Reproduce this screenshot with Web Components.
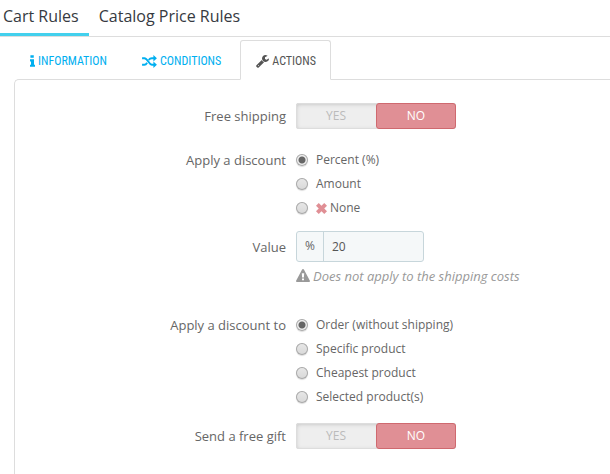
<!DOCTYPE html>
<html lang="en">
<head>
<meta charset="utf-8">
<title>Cart Rules</title>
<style>
  body { margin: 0; background: #fff; color: #666; font: 12px/24px "Open Sans", "Noto Sans", sans-serif; }
</style>
</head>
<body>
<page-nav>
  <nav-link href="#cart-rules" current>Cart Rules</nav-link>
  <nav-link href="#catalog-price-rules">Catalog Price Rules</nav-link>
</page-nav>
<tab-bar>
  <tab-item icon="info">INFORMATION</tab-item>
  <tab-item icon="random">CONDITIONS</tab-item>
  <tab-item icon="wrench" selected>ACTIONS</tab-item>
</tab-bar>
<rule-panel>
  <switch-row label="Free shipping"></switch-row>
  <radio-row label="Apply a discount" options="Percent (%)|Amount|None" crossed="None"></radio-row>
  <value-row label="Value" unit="%" value="20">Does not apply to the shipping costs</value-row>
  <radio-row label="Apply a discount to" options="Order (without shipping)|Specific product|Cheapest product|Selected product(s)"></radio-row>
  <switch-row label="Send a free gift"></switch-row>
</rule-panel>

<script>
const ICONS = {
  info: ['0 0 6 14', 5, 12, '<path d="M.5 0h4v3.200h-4zM0 5h4.800v6.500H6V14H0v-2.500h1.200V7.500H0z"/>'],
  random: ['0 0 16 14', 15, 13, '<path d="M0 3.500h2.500c3.800 0 4.500 7 8 7H13M0 10.500h2.500c1.300 0 2.200-1 2.900-2.200M7.200 5.400C8 4.200 9 3.500 10.500 3.500H13" fill="none" stroke="currentColor" stroke-width="2"/><path d="M12.200 0 16 3.500 12.200 7zM12.200 7 16 10.500 12.200 14z"/>'],
  wrench: ['0 0 1664 1664', 13, 13, '<path d="M384 1344q0-26-19-45t-45-19-45 19-19 45 19 45 45 19 45-19 19-45zm644-420-682 682q-37 37-90 37-52 0-91-37L59 1498q-38-36-38-90 0-53 38-91l681-681q39 98 114.500 173.500T1028 924zm634-435q0 39-23 106-47 134-164.500 217.500T1216 896q-185 0-316.500-131.500T768 448t131.500-316.500T1216 0q58 0 121.500 16.500T1445 63q16 11 16 28t-16 28l-293 169v224l193 107q5-3 79-48.500t135.500-81T1630 454q15 0 23.500 10t8.500 25z"/>'],
  cross: ['0 0 12 12', 11, 11, '<path d="M3 0 6 3 9 0l3 3-3 3 3 3-3 3-3-3-3 3-3-3 3-3-3-3z"/>'],
  warning: ['0 0 14 13', 14, 13, '<path fill-rule="evenodd" d="M7 0q.6 0 .9.500l6 11.200Q14.300 13 13 13H1Q-.3 13 .1 11.700L6.100.5Q6.400 0 7 0zM5.800 4.200 6.100 8.500h1.800L8.200 4.200zM6 9.500v1.800h2V9.500z"/>']
};
const icon = name => {
  const [box, w, h, body] = ICONS[name];
  return `<svg viewBox="${box}" width="${w}" height="${h}" fill="currentColor" aria-hidden="true">${body}</svg>`;
};
const define = (name, render) => customElements.define(name, class extends HTMLElement {
  constructor() { super(); this.attachShadow({ mode: 'open' }); }
  connectedCallback() { this.shadowRoot.innerHTML = render(this); }
});

define('page-nav', () => `
  <style>
    :host { display: block; border-bottom: 1px solid #ddd; }
    nav { display: flex; gap: 7px; height: 36px; }
  </style>
  <nav><slot></slot></nav>`);

define('nav-link', el => `
  <style>
    :host { display: flex; }
    a { box-sizing: border-box; padding: 4px 10px 0 3px; color: #363a41; font-size: 16px; line-height: 25px; text-decoration: none; border-bottom: 3px solid transparent; white-space: nowrap; }
    a[aria-current] { border-color: #42d0ed; }
  </style>
  <a href="${el.getAttribute('href')}" ${el.hasAttribute('current') ? 'aria-current="page"' : ''}><slot></slot></a>`);

define('tab-bar', () => `
  <style>
    :host { display: flex; align-items: flex-end; gap: 4px; padding: 3px 0 0 14px; }
  </style>
  <slot></slot>`);

define('tab-item', el => `
  <style>
    :host { display: block; position: relative; margin-bottom: -1px; }
    button { display: flex; align-items: center; gap: 3px; height: 40px; box-sizing: border-box; padding: 2px 14px 0 15px; border: 1px solid transparent; border-radius: 3px 3px 0 0; background: none; color: #00aff0; font: 12px/20px "Ubuntu Condensed", "Roboto Condensed", "Liberation Sans Narrow", sans-serif; white-space: nowrap; }
    button[aria-selected=true] { border-color: #ddd #ddd #fff; background: #fff; color: #555; }
  </style>
  <button type="button" role="tab" aria-selected="${el.hasAttribute('selected')}">${icon(el.getAttribute('icon'))}<slot></slot></button>`);

define('rule-panel', () => `
  <style>
    :host { display: block; margin-left: 14px; padding: 9px 0 25px; border: solid #ddd; border-width: 1px 0 0 1px; border-radius: 5px 0 0 0; }
  </style>
  <slot></slot>`);

const ROW = `
  :host { display: block; }
  .row { display: grid; grid-template-columns: 271px minmax(0, 1fr); column-gap: 10px; }
  .name { font-size: 13px; line-height: 26px; text-align: right; }`;

define('switch-row', el => `
  <style>${ROW}
    :host { margin: 14px 0 19px; }
    .switch { display: grid; grid-template-columns: 1fr 1fr; width: 160px; height: 26px; border-radius: 3px; background: #eee; box-shadow: inset 0 0 0 1px #ddd, inset 0 1px 4px #bbb; }
    label { position: relative; display: grid; place-items: center; line-height: 24px; color: #bbb; border: 1px solid transparent; border-radius: 3px; }
    input { position: absolute; inset: 0; margin: 0; opacity: 0; }
    label:has(:checked) { background: #e08f95; border-color: #cf696f; color: #fff; }
  </style>
  <div class="row">
    <span class="name" id="name">${el.getAttribute('label')}</span>
    <div class="switch" role="radiogroup" aria-labelledby="name">
      <label><input type="radio" name="state">YES</label>
      <label><input type="radio" name="state" checked>NO</label>
    </div>
  </div>`);

define('radio-row', el => `
  <style>${ROW}
    :host { margin-bottom: 11px; }
    .name { line-height: 25px; }
    .options { display: grid; justify-items: start; }
    label { display: flex; align-items: center; gap: 8px; height: 24px; }
    .text { display: flex; align-items: center; gap: 3px; }
    svg { color: #e08f95; }
    input { appearance: none; width: 12px; height: 12px; margin: 0; border-radius: 50%; background: linear-gradient(#e8e8e8, #d8d8d8); box-shadow: inset 0 0 0 1px #aaa, 0 1px 1px #ddd; }
    input:checked { background: radial-gradient(circle, #666 0 3px, #eee 4px); }
  </style>
  <div class="row" role="radiogroup" aria-labelledby="name">
    <span class="name" id="name">${el.getAttribute('label')}</span>
    <div class="options">${el.getAttribute('options').split('|').map((text, i) => `
      <label><input type="radio" name="choice" ${i ? '' : 'checked'}><span class="text">${text === el.getAttribute('crossed') ? icon('cross') : ''}<span>${text}</span></span></label>`).join('')}
    </div>
  </div>`);

define('value-row', el => `
  <style>${ROW}
    :host { margin-bottom: 25px; }
    .name { line-height: 32px; }
    .group { display: flex; width: 128px; height: 31px; box-sizing: border-box; border: 1px solid #c7d6db; border-radius: 3px; background: #f5f8f9; overflow: hidden; }
    .unit { width: 26px; line-height: 28px; text-align: center; border-right: 1px solid #c7d6db; }
    input { flex: 1; min-width: 0; padding: 0 8px; border: 0; background: none; color: #555; font: inherit; }
    .hint { display: flex; align-items: center; gap: 3px; margin-top: 2px; color: #999; font-size: 13px; font-style: italic; }
    .hint svg { margin-bottom: 2px; }
  </style>
  <div class="row">
    <label class="name" for="value">${el.getAttribute('label')}</label>
    <div>
      <div class="group"><span class="unit">${el.getAttribute('unit')}</span><input id="value" type="text" value="${el.getAttribute('value')}" aria-describedby="hint"></div>
      <div class="hint" id="hint">${icon('warning')}<span><slot></slot></span></div>
    </div>
  </div>`);
</script>
</body>
</html>
